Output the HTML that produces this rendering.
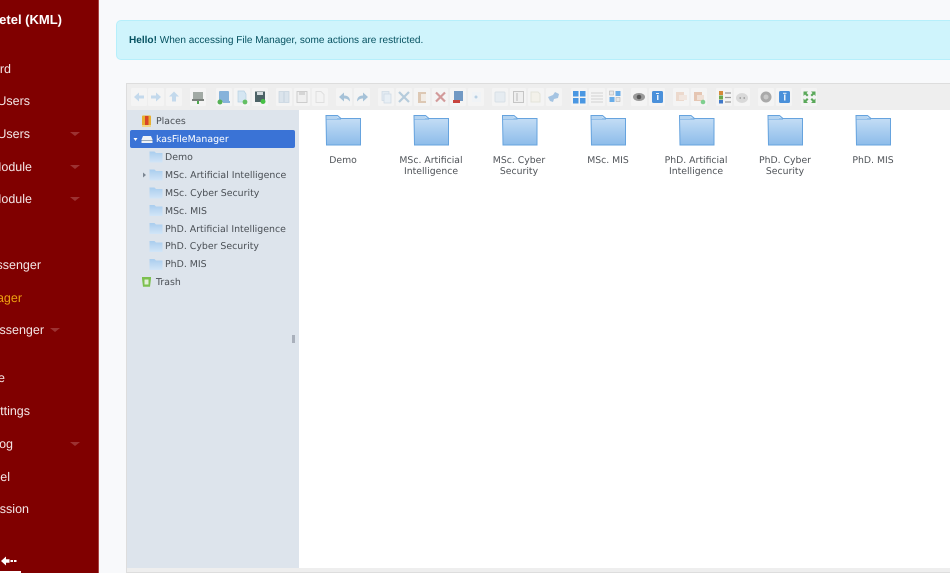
<!DOCTYPE html>
<html><head><meta charset="utf-8">
<style>
html,body{margin:0;padding:0;width:950px;height:573px;overflow:hidden;background:#f8f9fb;font-family:"Liberation Sans",sans-serif;text-rendering:geometricPrecision}
#wrap{position:absolute;left:0;top:0;width:950px;height:573px;overflow:hidden;filter:blur(.35px)}
#side{position:absolute;left:0;top:0;width:98px;height:573px;background:#800000;border-right:1px solid #a84444;overflow:hidden}
#side span{position:absolute;white-space:nowrap;color:#f3e6e6;font-size:12.5px;line-height:16px}
#side i{position:absolute;width:0;height:0;border-left:5px solid transparent;border-right:5px solid transparent;border-top:4px solid #9c3232}
#alert{position:absolute;left:116px;top:20px;width:850px;height:38px;background:#cff4fc;border:1px solid #b6effb;border-radius:5px;color:#055160;font-size:10.05px;line-height:40px;padding-left:12px;box-sizing:content-box}
#fm{position:absolute;left:126px;top:83px;width:830px;height:490px;background:#eee;border:1px solid #ddd;box-sizing:border-box}
#tree{position:absolute;left:127px;top:110px;width:172px;height:458px;background:#dde4ec}
#main{position:absolute;left:299px;top:110px;width:651px;height:458px;background:#fff}
#sel{position:absolute;left:130px;top:130px;width:165px;height:18px;background:#3a73d6;border-radius:2px}
.t{position:absolute;white-space:nowrap;font-family:"DejaVu Sans",sans-serif;font-size:9.4px;line-height:14px;color:#4a4f55}
.l{position:absolute;width:88px;text-align:center;font-family:"DejaVu Sans",sans-serif;font-size:9.3px;line-height:11px;color:#4f5358}
svg{position:absolute;left:0;top:0}
</style></head><body><div id="wrap">

<div id="side">
<span style="right:36px;top:12px;font-weight:bold;font-size:13px;color:#fff">Mazetel (KML)</span>
<span style="right:87px;top:61px">Dashboard</span>
<span style="right:68px;top:93px">Manage Users</span>
<span style="right:68px;top:126px">Manage Users</span>
<span style="right:66px;top:159px">Manage Module</span>
<span style="right:66px;top:191px">Manage Module</span>
<span style="right:57px;top:257px">Messenger</span>
<span style="right:76px;top:290px;color:#eda010">File Manager</span>
<span style="right:54px;top:322px">Messenger</span>
<span style="right:93px;top:370px">Profile</span>
<span style="right:68px;top:403px">Settings</span>
<span style="right:85px;top:436px">Blog</span>
<span style="right:88px;top:469px">Panel</span>
<span style="right:69px;top:501px">Session</span>
<i style="left:70px;top:132px"></i><i style="left:70px;top:165px"></i><i style="left:70px;top:197px"></i>
<i style="left:50px;top:328px"></i><i style="left:70px;top:442px"></i>
<svg width="99" height="573"><path d="M1 561l5-4.500v2.800h3.500v3.400h-3.500v2.800zM10.500 560h2.500v2h-2.500zM14 560h2.500v2h-2.500z" fill="#fff"/><rect x="0" y="571" width="21" height="2" fill="#fff"/></svg>
</div>

<div id="alert"><b>Hello!</b> When accessing File Manager, some actions are restricted.</div>

<div id="fm"></div>
<div id="tree"></div>
<div id="main"></div>
<div id="sel"></div>

<svg width="950" height="573">
<defs>
<linearGradient id="fg" x1="0" y1="0" x2="0" y2="1"><stop offset="0" stop-color="#a9cdee"/><stop offset="1" stop-color="#d2e5f7"/></linearGradient>
<linearGradient id="fb" x1="0" y1="0" x2="0" y2="1"><stop offset="0" stop-color="#c9e0f6"/><stop offset="1" stop-color="#8dbcea"/></linearGradient>
<g id="folder"><path d="M-17 -29.500h11.500l3.500 3h19.500v26.500h-34z" fill="url(#fb)" stroke="#66a3de" stroke-width="1"/><path d="M-17 -26h15" stroke="#66a3de" fill="none" stroke-width="1"/><rect x="-16.500" y="-29" width="10.500" height="3" fill="#b4d3f0"/></g>
<g id="mini"><path d="M0 0h5l1.500 1.500h6.500v9.500h-13z" fill="url(#fg)"/></g>
</defs>

<!-- toolbar buttons -->
<g fill="#f4f4f4">
<rect x="131" y="88" width="16" height="18" rx="1"/><rect x="148" y="88" width="16" height="18" rx="1"/><rect x="166" y="88" width="16" height="18" rx="1"/>
<rect x="190" y="88" width="16" height="18" rx="1"/>
<rect x="216" y="88" width="16" height="18" rx="1"/><rect x="234" y="88" width="16" height="18" rx="1"/><rect x="252" y="88" width="16" height="18" rx="1"/>
<rect x="276" y="88" width="16" height="18" rx="1"/><rect x="294" y="88" width="16" height="18" rx="1"/><rect x="312" y="88" width="16" height="18" rx="1"/>
<rect x="336" y="88" width="16" height="18" rx="1"/><rect x="354" y="88" width="16" height="18" rx="1"/>
<rect x="378" y="88" width="16" height="18" rx="1"/><rect x="396" y="88" width="16" height="18" rx="1"/><rect x="414" y="88" width="16" height="18" rx="1"/><rect x="432" y="88" width="16" height="18" rx="1"/><rect x="450" y="88" width="16" height="18" rx="1"/><rect x="468" y="88" width="16" height="18" rx="1"/>
<rect x="492" y="88" width="16" height="18" rx="1"/><rect x="510" y="88" width="16" height="18" rx="1"/><rect x="528" y="88" width="16" height="18" rx="1"/><rect x="546" y="88" width="16" height="18" rx="1"/>
<rect x="571" y="88" width="16" height="18" rx="1"/><rect x="589" y="88" width="16" height="18" rx="1"/><rect x="607" y="88" width="16" height="18" rx="1"/>
<rect x="631" y="88" width="16" height="18" rx="1"/><rect x="649" y="88" width="16" height="18" rx="1"/>
<rect x="673" y="88" width="16" height="18" rx="1"/><rect x="691" y="88" width="16" height="18" rx="1"/>
<rect x="716" y="88" width="16" height="18" rx="1"/><rect x="734" y="88" width="16" height="18" rx="1"/>
<rect x="758" y="88" width="16" height="18" rx="1"/><rect x="776" y="88" width="16" height="18" rx="1"/>
<rect x="801" y="88" width="16" height="18" rx="1"/>
</g>

<!-- arrows -->
<g fill="#c3d9ec">
<path d="M134 97l5-4.500v3h5v3h-5v3z"/><path d="M161 97l-5-4.500v3h-5v3h5v3z"/><path d="M174 91.500l5 5h-3v5h-4v-5h-3z"/>
</g>
<!-- drive -->
<rect x="193" y="92" width="10" height="7" fill="#a2aaa5"/><rect x="192" y="99" width="12" height="2" fill="#7a807c"/><path d="M198 101v3" stroke="#4fa84f" stroke-width="2"/>
<!-- new folder / file / save -->
<rect x="219" y="91" width="10" height="11" rx="1" fill="#86b2da"/><circle cx="220" cy="102" r="2.500" fill="#55b055"/><rect x="223" y="101" width="7" height="2" fill="#86b2da"/>
<path d="M238 91h6l2 3v8h-8z" fill="#d5e6f2" stroke="#b5d0e3" stroke-width=".7"/><circle cx="245" cy="102" r="2.400" fill="#63bf63"/>
<rect x="255" y="91.500" width="10" height="10.500" fill="#4c6266"/><rect x="257" y="92" width="6" height="3" fill="#d6dde0"/><circle cx="263" cy="101.500" r="2.500" fill="#45c045"/>
<!-- disabled open, save, select -->
<rect x="279" y="91.500" width="10" height="11" fill="#dbe4ec" stroke="#c5d2de" stroke-width=".7"/><path d="M284 92v10" stroke="#c5d2de"/>
<rect x="297" y="91.500" width="10" height="11" fill="#efefef" stroke="#c9c9c9" stroke-width=".9"/><rect x="299" y="92" width="6" height="3" fill="#d5d5d5"/>
<path d="M316 91.500h5l3 3v8h-8z" fill="#f3f3f3" stroke="#dfdfdf"/>
<!-- undo/redo -->
<path d="M339 97l5-4.500v3c4 0 6 2 6 6-2-2-3-3-6-3v3z" fill="#a6c2d8"/>
<path d="M368 97l-5-4.500v3c-4 0-6 2-6 6 2-2 3-3 6-3v3z" fill="#a6c2d8"/>
<!-- copy cut paste delete etc -->
<rect x="382" y="91.500" width="7" height="9" fill="#e3ebf2" stroke="#ccd9e4" stroke-width=".7"/><rect x="384" y="94" width="7" height="9" fill="#e8eff5" stroke="#ccd9e4" stroke-width=".7"/>
<path d="M399 92l10 10M409 92l-10 10" stroke="#b5cbdc" stroke-width="2.200"/>
<rect x="418" y="92" width="8" height="11" fill="#ddc8b4"/><rect x="421" y="94" width="5" height="7" fill="#f2ece5"/>
<path d="M436 92.500l9 9M445 92.500l-9 9" stroke="#d29a9a" stroke-width="2.200"/>
<rect x="454" y="91" width="9" height="10" fill="#7199c4"/><rect x="453" y="100" width="7" height="3" fill="#c7433d"/>
<rect x="472" y="92" width="9" height="10" fill="#f0f3f6"/><circle cx="476" cy="97" r="1.500" fill="#b8d0e4"/>
<!-- group 6 -->
<rect x="495" y="92" width="10" height="10" rx="1" fill="#e6ecf1" stroke="#d8e0e6"/>
<rect x="513.500" y="91.500" width="10" height="11" fill="#efefef" stroke="#c5c5c5"/><path d="M517 93v8" stroke="#bbb"/>
<path d="M531 92h7l2 2v8h-9z" fill="#f3f1ea" stroke="#e3e3da"/>
<path d="M548 97l5-2 2-3 4 2-1 4-4 1-1 3-3-1z" fill="#a5c4e2"/>
<!-- views -->
<g fill="#4a97e2"><rect x="573" y="91" width="5.500" height="5.500"/><rect x="580" y="91" width="5.500" height="5.500"/><rect x="573" y="98" width="5.500" height="5.500"/><rect x="580" y="98" width="5.500" height="5.500"/></g>
<g fill="#e3e3e3"><rect x="591" y="92" width="12" height="2"/><rect x="591" y="95" width="12" height="2"/><rect x="591" y="98" width="12" height="2"/><rect x="591" y="101" width="12" height="2"/></g>
<rect x="615.500" y="91" width="5" height="5" fill="#6aade8"/><rect x="609.500" y="97" width="5" height="5" fill="#6aade8"/><rect x="609.500" y="91" width="4" height="4" fill="#e8e8e8" stroke="#aaa" stroke-width=".5"/><rect x="616" y="97.500" width="4" height="4" fill="#e8e8e8" stroke="#aaa" stroke-width=".5"/>
<!-- eye / info -->
<ellipse cx="639" cy="97" rx="6" ry="4" fill="#9a9a9a"/><circle cx="639" cy="97" r="2.300" fill="#555"/>
<rect x="652" y="91" width="11" height="12" rx="1.500" fill="#4a90da"/><rect x="657" y="95" width="1.500" height="5" fill="#e8f2fb"/><rect x="656" y="93" width="3" height="1" fill="#e8f2fb"/>
<!-- ext -->
<rect x="676" y="92" width="8" height="9" fill="#ecd9cd"/><rect x="679" y="95" width="8" height="5" fill="#f1e6df"/>
<rect x="694" y="92" width="8" height="9" fill="#e5c5b2"/><rect x="697" y="95" width="7" height="5" fill="#efe0d6"/><circle cx="703" cy="102" r="2.300" fill="#7fcf8f"/>
<!-- sort/list -->
<rect x="719" y="91" width="4" height="4" fill="#d58a3a"/><rect x="719" y="95.500" width="4" height="4" fill="#6ca84c"/><rect x="719" y="100" width="4" height="3.500" fill="#3f78c8"/>
<path d="M725 93h6M725 97.500h6M725 102h6" stroke="#9b9b9b" stroke-width="1.200"/>
<ellipse cx="742" cy="98" rx="6" ry="5" fill="#d9d9d9"/><path d="M739.500 98h1.500M743.500 98h1.500" stroke="#999" stroke-width="1.400"/>
<!-- prefs/help -->
<circle cx="766" cy="97" r="5.500" fill="#a9a9a9"/><circle cx="766" cy="97" r="2.500" fill="#c9c9c9"/>
<rect x="779" y="91" width="11" height="12" rx="1.500" fill="#4a90da"/><rect x="784" y="94.500" width="1.500" height="6" fill="#e8f2fb"/><rect x="783" y="92.800" width="3.500" height="1" fill="#e8f2fb"/>
<!-- fullscreen -->
<g fill="#5aa85a"><path d="M803.500 91.500h4.500l-1.500 1.500 2 2-1.500 1.500-2-2-1.500 1.500z"/><path d="M815.500 91.500h-4.500l1.500 1.500-2 2 1.500 1.500 2-2 1.500 1.500z"/><path d="M803.500 103h4.500l-1.500-1.500 2-2-1.500-1.500-2 2-1.500-1.500z"/><path d="M815.500 103h-4.500l1.500-1.500-2-2 1.500-1.500 2 2 1.500-1.500z"/></g>

<!-- tree icons -->
<rect x="142" y="115.500" width="9" height="11" rx="1" fill="#e8b030"/><rect x="145" y="116" width="3.500" height="9" fill="#d8452a"/><rect x="142" y="125" width="9" height="2" fill="#f0d88a"/>
<path d="M133.500 138l4 0-2 3z" fill="#fff"/>
<path d="M143 136h8l1.500 3.500v3.500h-11v-3.500z" fill="#eef2f6"/><rect x="141.500" y="140" width="11" height="1" fill="#9aa8b6"/>
<use href="#mini" x="149.500" y="151.500"/>
<path d="M143 172.500v5l3-2.500z" fill="#7c8692"/>
<use href="#mini" x="149.500" y="169.500"/><use href="#mini" x="149.500" y="187.500"/><use href="#mini" x="149.500" y="205"/><use href="#mini" x="149.500" y="223"/><use href="#mini" x="149.500" y="241"/><use href="#mini" x="149.500" y="259"/>
<path d="M142 277h9v1.800l-1 8h-7l-1-8z" fill="#7cc04f"/><rect x="144.500" y="279.500" width="4" height="5" fill="#e2efd8"/>
<rect x="292" y="335" width="3" height="8" fill="#a9b0bb"/>

<!-- grid folders -->
<use href="#folder" x="343" y="145"/><use href="#folder" x="431" y="145"/><use href="#folder" x="519.500" y="145"/><use href="#folder" x="608" y="145"/><use href="#folder" x="696.500" y="145"/><use href="#folder" x="785" y="145"/><use href="#folder" x="873" y="145"/>
</svg>

<div class="t" style="left:156px;top:115px">Places</div>
<div class="t" style="left:156px;top:133px;color:#fff">kasFileManager</div>
<div class="t" style="left:165px;top:151px">Demo</div>
<div class="t" style="left:165px;top:169px">MSc. Artificial Intelligence</div>
<div class="t" style="left:165px;top:187px">MSc. Cyber Security</div>
<div class="t" style="left:165px;top:205px">MSc. MIS</div>
<div class="t" style="left:165px;top:223px">PhD. Artificial Intelligence</div>
<div class="t" style="left:165px;top:240px">PhD. Cyber Security</div>
<div class="t" style="left:165px;top:258px">PhD. MIS</div>
<div class="t" style="left:156px;top:276px">Trash</div>

<div class="l" style="left:299px;top:154.500px">Demo</div>
<div class="l" style="left:387px;top:154.500px">MSc. Artificial Intelligence</div>
<div class="l" style="left:475px;top:154.500px">MSc. Cyber Security</div>
<div class="l" style="left:564px;top:154.500px">MSc. MIS</div>
<div class="l" style="left:652px;top:154.500px">PhD. Artificial Intelligence</div>
<div class="l" style="left:741px;top:154.500px">PhD. Cyber Security</div>
<div class="l" style="left:829px;top:154.500px">PhD. MIS</div>

</div></body></html>
